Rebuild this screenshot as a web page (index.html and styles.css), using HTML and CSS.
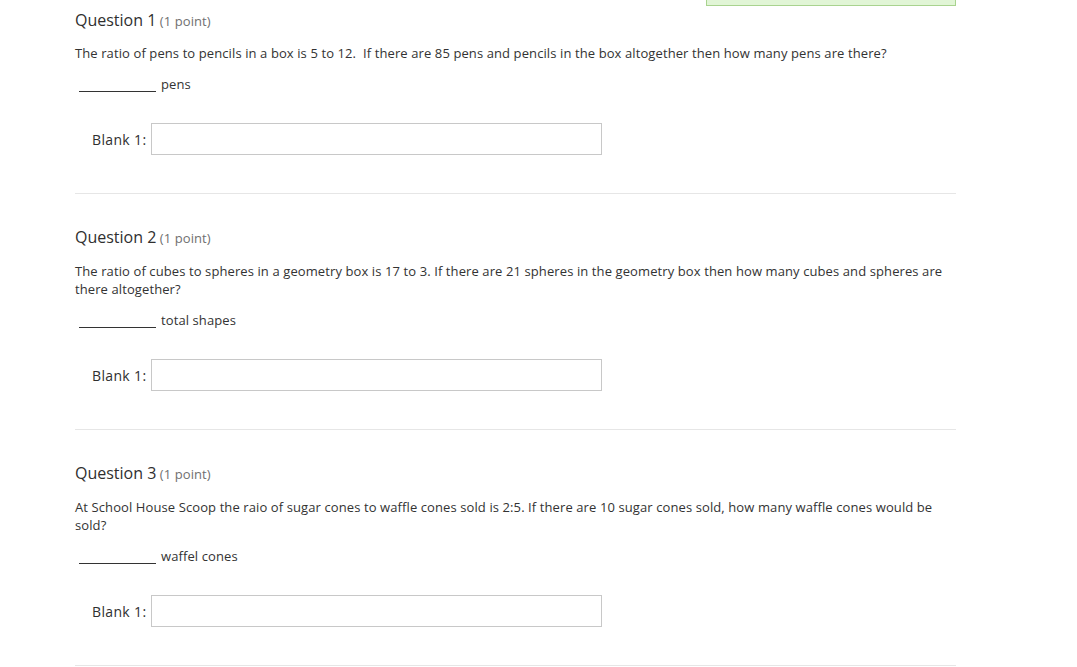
FILE: index.html
```html
<!DOCTYPE html>
<html>
<head>
<meta charset="utf-8">
<link rel="stylesheet" href="styles.css">
</head>
<body>
<div class="page">
  <div class="topbar"><div class="status-box"></div></div>

  <div class="question first">
    <div class="q-head"><span class="q-title">Question 1</span> <span class="q-points">(1 point)</span></div>
    <p class="q-text">The ratio of pens to pencils in a box is 5 to 12.&nbsp; If there are 85 pens and pencils in the box altogether then how many pens are there?</p>
    <div class="blank-row"><span class="blank-line"></span><span class="unit">pens</span></div>
    <div class="answer-row"><label class="answer-label">Blank 1:</label><input class="answer-input" type="text"></div>
  </div>

  <div class="question">
    <div class="q-head"><span class="q-title">Question 2</span> <span class="q-points">(1 point)</span></div>
    <p class="q-text">The ratio of cubes to spheres in a geometry box is 17 to 3. If there are 21 spheres in the geometry box then how many cubes and spheres are there altogether?</p>
    <div class="blank-row"><span class="blank-line"></span><span class="unit">total shapes</span></div>
    <div class="answer-row"><label class="answer-label">Blank 1:</label><input class="answer-input" type="text"></div>
  </div>

  <div class="question">
    <div class="q-head"><span class="q-title">Question 3</span> <span class="q-points">(1 point)</span></div>
    <p class="q-text">At School House Scoop the raio of sugar cones to waffle cones sold is 2:5. If there are 10 sugar cones sold, how many waffle cones would be sold?</p>
    <div class="blank-row"><span class="blank-line"></span><span class="unit">waffel cones</span></div>
    <div class="answer-row"><label class="answer-label">Blank 1:</label><input class="answer-input" type="text"></div>
  </div>
</div>
</body>
</html>
```

FILE: styles.css
```css
html, body {
  margin: 0;
  padding: 0;
  background: #ffffff;
}

body {
  font-family: "Open Sans", "Liberation Sans", sans-serif;
  color: #333333;
  font-size: 13px;
}

.page {
  margin-left: 75px;
  width: 881px;
}

.topbar {
  display: flex;
  justify-content: flex-end;
  height: 7px;
}

.status-box {
  width: 248px;
  height: 6px;
  margin-top: -1px;
  background: #e1f5d6;
  border: 1px solid #a9d38f;
  border-top: none;
}

.question {
  padding-top: 33px;
  padding-bottom: 38px;
  border-bottom: 1px solid #e6e6e6;
}

.question.first {
  padding-top: 3px;
}

.question.first .q-text {
  margin-top: 14px;
}

.q-head {
  line-height: 20px;
  height: 20px;
}

.q-title {
  font-size: 16px;
  color: #2f2f2f;
}

.q-points {
  font-size: 13px;
  color: #707070;
  letter-spacing: 0.1px;
}

.q-text {
  margin: 15px 0 0 0;
  line-height: 18px;
  font-size: 13px;
  letter-spacing: 0.1px;
  color: #333333;
}

.blank-row {
  margin-top: 13px;
  line-height: 18px;
  display: flex;
  align-items: center;
  letter-spacing: 0.1px;
}

.blank-line {
  display: inline-block;
  width: 77px;
  height: 15px;
  margin-left: 4px;
  border-bottom: 1px solid #333333;
}

.unit {
  margin-left: 5px;
}

.answer-row {
  margin-top: 30px;
  display: flex;
  align-items: center;
  padding-left: 17px;
}

.answer-label {
  font-size: 14px;
  letter-spacing: 0.35px;
  color: #2f2f2f;
  margin-right: 5px;
}

.answer-input {
  box-sizing: border-box;
  width: 451px;
  height: 32px;
  margin: 0;
  border: 1px solid #c8c8c8;
  padding: 0 6px;
  background: #ffffff;
  font-family: inherit;
}
```
